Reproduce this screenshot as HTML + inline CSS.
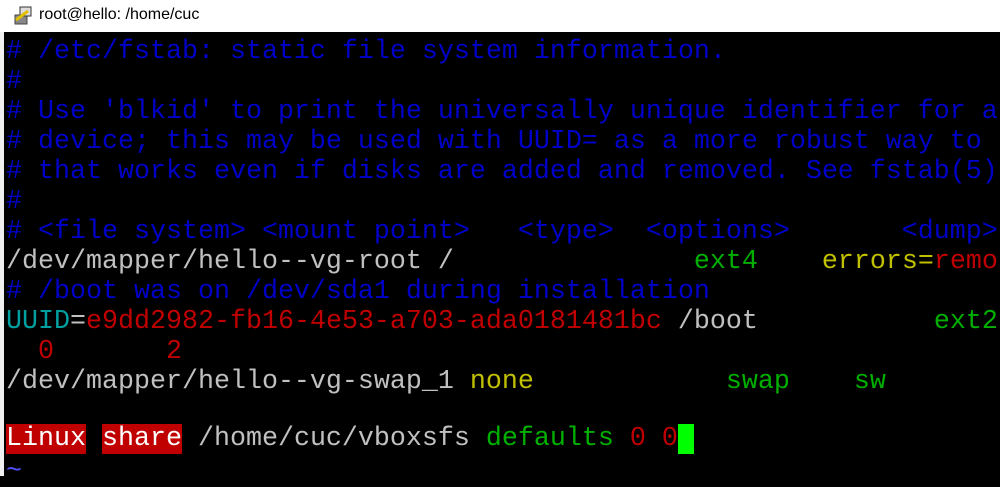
<!DOCTYPE html>
<html><head><style>
body{margin:0;width:1000px;height:476px;overflow:hidden;background:#000;position:relative}
#tb{position:absolute;left:0;top:0;width:1000px;height:32px;background:#fff;font:16px "Liberation Sans",sans-serif;color:#000}
#tb span{position:absolute;left:39px;top:6px}
#lb{position:absolute;left:0;top:32px;width:4px;height:444px;background:#f0f0f0}
.l{position:absolute;left:6px;height:30px;margin-top:4px;font:26.67px/30px "Liberation Mono",monospace;white-space:pre;color:#c0c0c0}
.b{color:#0000c8}.g{color:#00b000}.y{color:#c0c000}.r{color:#c00000}.c{color:#00a0a0}
.hl{background:#c00000;color:#fff}
.cur{background:#00ff00}
.t{color:#5050ff}
</style></head><body>
<div id="tb"><svg style="position:absolute;left:12px;top:6px" width="22" height="20" viewBox="0 0 22 20"><rect x="3" y="9" width="12" height="9" fill="#888" stroke="#444"/><rect x="8" y="1" width="11" height="9" fill="#ddd" stroke="#333"/><path d="M4 14 L16 5" stroke="#e0c000" stroke-width="3"/></svg><span>root@hello: /home/cuc</span></div>
<div id="lb"></div>
<div class="l b" style="top:33px"># /etc/fstab: static file system information.</div>
<div class="l b" style="top:63px">#</div>
<div class="l b" style="top:93px"># Use 'blkid' to print the universally unique identifier for a</div>
<div class="l b" style="top:123px"># device; this may be used with UUID= as a more robust way to n</div>
<div class="l b" style="top:153px"># that works even if disks are added and removed. See fstab(5).</div>
<div class="l b" style="top:183px">#</div>
<div class="l b" style="top:213px"># &lt;file system&gt; &lt;mount point&gt;   &lt;type&gt;  &lt;options&gt;       &lt;dump&gt;</div>
<div class="l" style="top:243px">/dev/mapper/hello--vg-root /               <span class="g">ext4</span>    <span class="y">errors=</span><span class="r">remo</span></div>
<div class="l b" style="top:273px"># /boot was on /dev/sda1 during installation</div>
<div class="l" style="top:303px"><span class="c">UUID</span>=<span class="r">e9dd2982-fb16-4e53-a703-ada0181481bc</span> /boot           <span class="g">ext2</span></div>
<div class="l r" style="top:333px">  0       2</div>
<div class="l" style="top:363px">/dev/mapper/hello--vg-swap_1 <span class="y">none</span>            <span class="g">swap</span>    <span class="g">sw</span></div>
<div class="l" style="top:420px"><span class="hl">Linux</span> <span class="hl">share</span> /home/cuc/vboxsfs <span class="g">defaults</span> <span class="r">0 0</span><span class="cur"> </span></div>
<div class="l t" style="top:453px">~</div>
</body></html>
